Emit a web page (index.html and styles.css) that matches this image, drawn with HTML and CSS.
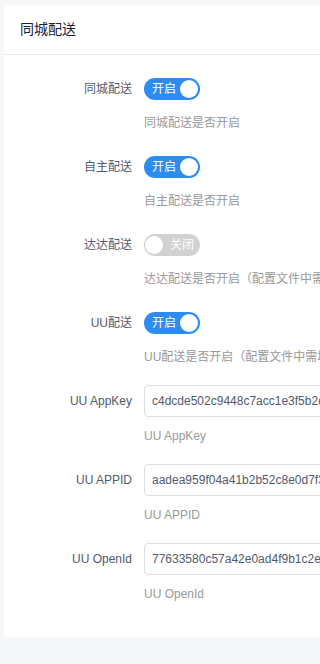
FILE: index.html
```html
<!DOCTYPE html>
<html lang="zh">
<head>
<meta charset="utf-8">
<title>同城配送</title>
<link rel="stylesheet" href="styles.css">
</head>
<body>
<div class="page">
  <div class="card">
    <div class="card-head">同城配送</div>
    <div class="card-body">
      <div class="item">
        <label class="label">同城配送</label>
        <div class="content">
          <div class="control"><span class="switch on"><span class="switch-text">开启</span><span class="knob"></span></span></div>
          <div class="help">同城配送是否开启</div>
        </div>
      </div>
      <div class="item">
        <label class="label">自主配送</label>
        <div class="content">
          <div class="control"><span class="switch on"><span class="switch-text">开启</span><span class="knob"></span></span></div>
          <div class="help">自主配送是否开启</div>
        </div>
      </div>
      <div class="item">
        <label class="label">达达配送</label>
        <div class="content">
          <div class="control"><span class="switch off"><span class="knob"></span><span class="switch-text">关闭</span></span></div>
          <div class="help">达达配送是否开启（配置文件中需填写相关参数）</div>
        </div>
      </div>
      <div class="item">
        <label class="label">UU配送</label>
        <div class="content">
          <div class="control"><span class="switch on"><span class="switch-text">开启</span><span class="knob"></span></span></div>
          <div class="help">UU配送是否开启（配置文件中需填写相关参数）</div>
        </div>
      </div>
      <div class="item item-input">
        <label class="label">UU AppKey</label>
        <div class="content">
          <div class="control"><input class="input" type="text" value="c4dcde502c9448c7acc1e3f5b2d7a901"></div>
          <div class="help">UU AppKey</div>
        </div>
      </div>
      <div class="item item-input">
        <label class="label">UU APPID</label>
        <div class="content">
          <div class="control"><input class="input" type="text" value="aadea959f04a41b2b52c8e0d7f3a6b19"></div>
          <div class="help">UU APPID</div>
        </div>
      </div>
      <div class="item item-input">
        <label class="label">UU OpenId</label>
        <div class="content">
          <div class="control"><input class="input" type="text" value="77633580c57a42e0ad4f9b1c2e8d6a35"></div>
          <div class="help">UU OpenId</div>
        </div>
      </div>
    </div>
  </div>
</div>
</body>
</html>
```

FILE: styles.css
```css
html, body {
  margin: 0;
  padding: 0;
  background: #f5f7f9;
  overflow: hidden;
}
body {
  font-family: "Liberation Sans", "Noto Sans CJK SC", sans-serif;
  font-size: 12px;
  color: #515a6e;
}
.page {
  width: 100vw;
  height: 100vh;
  overflow: hidden;
  padding: 5px 0 0 4px;
  box-sizing: border-box;
}
.card {
  width: 720px;
  background: #fff;
}
.card-head {
  height: 49px;
  line-height: 49px;
  padding-left: 16px;
  font-size: 14px;
  color: #17233d;
  border-bottom: 1px solid #e8eaec;
}
.card-body {
  padding: 18px 16px 15px;
}
.item {
  display: flex;
  align-items: flex-start;
  margin-bottom: 19px;
}
.label {
  width: 124px;
  flex: none;
  box-sizing: border-box;
  padding-right: 12px;
  text-align: right;
  line-height: 32px;
  height: 32px;
  color: #515a6e;
}
.content {
  flex: 1;
  min-width: 0;
}
.control {
  height: 32px;
  display: flex;
  align-items: center;
}
.help {
  margin-top: 9px;
  line-height: 18px;
  color: #999;
  white-space: nowrap;
}
.item-input .help {
  margin-top: 10px;
}
.switch {
  display: flex;
  align-items: center;
  width: 56px;
  height: 22px;
  border-radius: 11px;
  box-sizing: border-box;
  padding: 0 2px 0 8px;
  color: #fff;
  font-size: 12px;
  line-height: 22px;
}
.switch.on {
  background: #2d8cf0;
  justify-content: space-between;
}
.switch.off {
  background: #d2d2d2;
  padding: 0 6px 0 1px;
  justify-content: space-between;
}
.knob {
  width: 18px;
  height: 18px;
  border-radius: 50%;
  background: #fff;
}
.input {
  width: 360px;
  height: 32px;
  box-sizing: border-box;
  border: 1px solid #dcdee2;
  border-radius: 4px;
  padding: 0 7px;
  font-family: "Liberation Sans", "Noto Sans CJK SC", sans-serif;
  font-size: 12px;
  color: #515a6e;
  background: #fff;
  outline: none;
}
```
